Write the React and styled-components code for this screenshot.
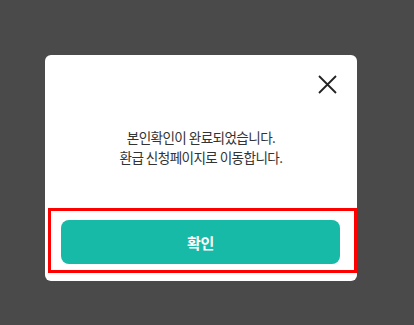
import React from "react";
import styled, { createGlobalStyle } from "styled-components";

const Global = createGlobalStyle`
  html, body { margin: 0; padding: 0; }
  body {
    background: #4a4a4a;
    font-family: "Noto Sans CJK KR", "Noto Sans", sans-serif;
  }
`;

const Screen = styled.div`
  width: 414px;
  height: 325px;
  background: #4a4a4a;
  padding-top: 55px;
  padding-left: 45px;
  box-sizing: border-box;
`;

const Card = styled.div`
  width: 312px;
  height: 226px;
  background: #ffffff;
  border-radius: 6px;
  display: flex;
  flex-direction: column;
  box-sizing: border-box;
`;

const CloseRow = styled.div`
  display: flex;
  justify-content: flex-end;
  padding: 20px 20px 0 0;
`;

const CloseButton = styled.button`
  width: 19px;
  height: 19px;
  padding: 0;
  border: none;
  background: none;
  display: flex;
  cursor: pointer;
`;

const Message = styled.p`
  margin: 33px 0 0;
  text-align: center;
  font-size: 13.6px;
  line-height: 20px;
  letter-spacing: -0.6px;
  color: #333333;
`;

const Footer = styled.div`
  margin: 41px 0 0 3px;
  width: 309px;
  height: 65px;
  border: 3px solid #ff0000;
  box-sizing: border-box;
  padding: 9px 14px 6px 10px;
  display: flex;
`;

const ConfirmButton = styled.button`
  flex: 1;
  height: 44px;
  border: none;
  border-radius: 8px;
  background: #17baa7;
  color: #ffffff;
  font-family: "Noto Sans CJK KR", "Noto Sans", sans-serif;
  font-size: 15px;
  font-weight: 700;
  letter-spacing: -0.3px;
  cursor: pointer;
`;

export default function App() {
  return (
    <>
      <Global />
      <Screen>
        <Card>
          <CloseRow>
            <CloseButton aria-label="닫기">
              <svg width="19" height="19" viewBox="0 0 19 19">
                <path d="M1 1L18 18M18 1L1 18" stroke="#222" strokeWidth="1.8" fill="none" />
              </svg>
            </CloseButton>
          </CloseRow>
          <Message>
            본인확인이 완료되었습니다.
            <br />
            환급 신청페이지로 이동합니다.
          </Message>
          <Footer>
            <ConfirmButton>확인</ConfirmButton>
          </Footer>
        </Card>
      </Screen>
    </>
  );
}
